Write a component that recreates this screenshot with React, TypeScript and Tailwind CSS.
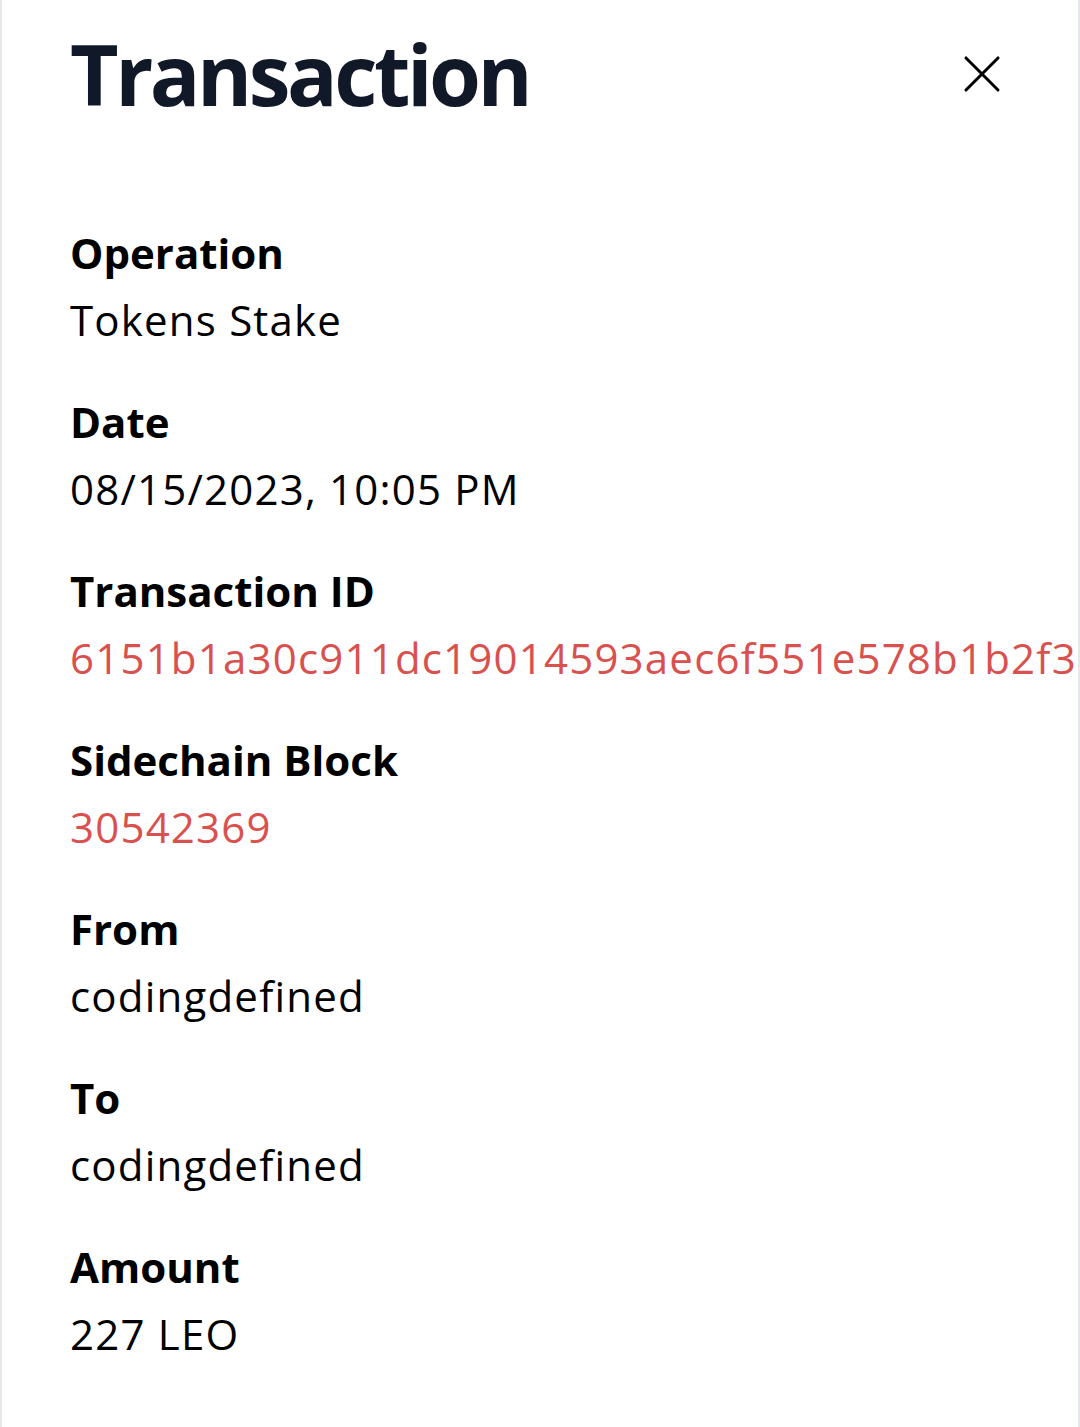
import React from 'react';
import { X } from 'lucide-react';

const rows: { label: string; value: string; link?: boolean }[] = [
  { label: 'Operation', value: 'Tokens Stake' },
  { label: 'Date', value: '08/15/2023, 10:05 PM' },
  { label: 'Transaction ID', value: '6151b1a30c911dc19014593aec6f551e578b1b2f3d8e07a4c5b9', link: true },
  { label: 'Sidechain Block', value: '30542369', link: true },
  { label: 'From', value: 'codingdefined' },
  { label: 'To', value: 'codingdefined' },
  { label: 'Amount', value: '227 LEO' },
];

export default function App() {
  return (
    <div
      className="h-[1427px] w-full overflow-hidden border-x-2 border-[#e5e7eb] bg-white"
      style={{ fontFamily: '"Open Sans", "Noto Sans", sans-serif' }}
    >
      <div className="flex items-center justify-between pl-[68px] pr-[64px] pt-[18px]">
        <h1 className="text-[84px] font-bold leading-[112px] tracking-[-3.5px] text-[#111827]">Transaction</h1>
        <button className="text-black">
          <X size={64} strokeWidth={1.15} />
        </button>
      </div>

      {/* details */}
      <div className="mt-[89px] flex flex-col gap-[35px] pl-[68px]">
        {rows.map(r => (
          <div key={r.label} className="flex flex-col">
            <span className="text-[42px] font-bold leading-[67px] text-black">{r.label}</span>
            <span
              className={`whitespace-nowrap text-[42px] leading-[67px] tracking-[1.2px] ${r.link ? 'text-[#d9514f]' : 'text-black'}`}
            >
              {r.value}
            </span>
          </div>
        ))}
      </div>
    </div>
  );
}
